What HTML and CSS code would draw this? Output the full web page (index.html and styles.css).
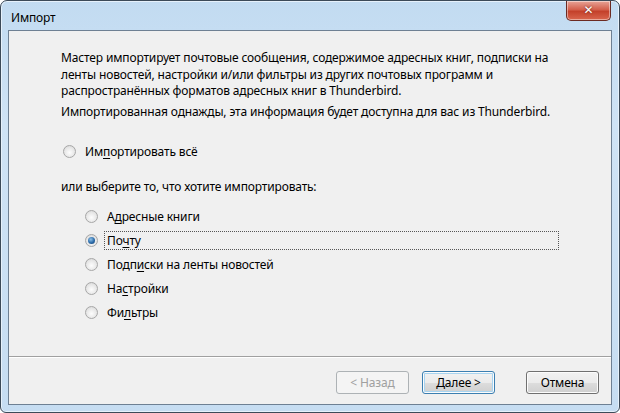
FILE: index.html
```html
<!DOCTYPE html>
<html lang="ru">
<head>
    <meta charset="UTF-8">
    <title>Импорт</title>
    <link rel="stylesheet" href="styles.css">
</head>
<body>
    <div class="window">
        <div class="titlebar">
            <span class="title">Импорт</span>
            <span class="close">&#x2715;</span>
        </div>
        <div class="client">
            <div class="content">
                <p class="intro">Мастер импортирует почтовые сообщения, содержимое адресных книг, подписки на ленты новостей, настройки и/или фильтры из других почтовых программ и распространённых форматов адресных книг в Thunderbird.</p>
                <p class="intro">Импортированная однажды, эта информация будет доступна для вас из Thunderbird.</p>

                <label class="opt opt_all"><span class="radio"></span>Им<u>п</u>ортировать всё</label>

                <p class="choose">или выберите то, что хотите импортировать:</p>

                <div class="list">
                    <label class="opt"><span class="radio"></span>А<u>д</u>ресные книги</label>
                    <label class="opt focused"><span class="radio checked"></span><span class="focus_text">По<u>ч</u>ту</span></label>
                    <label class="opt"><span class="radio"></span>Подп<u>и</u>ски на ленты новостей</label>
                    <label class="opt"><span class="radio"></span>На<u>с</u>тройки</label>
                    <label class="opt"><span class="radio"></span>Фи<u>л</u>ьтры</label>
                </div>
            </div>
            <div class="footer">
                <button class="btn" disabled>&lt; Назад</button>
                <button class="btn next">Далее &gt;</button>
                <button class="btn">Отмена</button>
            </div>
        </div>
    </div>
</body>
</html>
```

FILE: styles.css
```css
* {
    box-sizing: border-box;
}
html, body {
    margin: 0;
    background: #fff;
}
body {
    font-family: "Noto Sans", "Open Sans", sans-serif;
    font-size: 12px;
    letter-spacing: -0.15px;
    color: #000;
}
.window {
    width: 620px;
    height: 413px;
    display: flex;
    flex-direction: column;
    border: 1px solid #3c4a58;
    border-radius: 7px 7px 6px 6px;
    background: linear-gradient(to bottom, #c2dbf1 0%, #cfe3f5 30%, #c6ddf2 100%);
    box-shadow: inset 0 0 0 1px #e6f1fb;
}
.titlebar {
    height: 29px;
    flex-shrink: 0;
    display: flex;
    justify-content: space-between;
    align-items: flex-start;
}
.title {
    padding: 8px 0 0 10px;
    color: #000;
}
.close {
    width: 45px;
    height: 20px;
    margin-right: 8px;
    border: 1px solid #6b2a22;
    border-top: none;
    border-radius: 0 0 5px 5px;
    background: linear-gradient(to bottom, #e8a497 0%, #d4604c 45%, #c4412b 55%, #d9664e 100%);
    box-shadow: inset 0 0 0 1px rgba(255, 255, 255, 0.45);
    color: #fff;
    font-family: "DejaVu Sans", sans-serif;
    font-weight: bold;
    font-size: 12px;
    text-align: center;
    line-height: 19px;
    text-shadow: 0 0 2px #5a1a10;
}
.client {
    flex: 1;
    margin: 0 7px 7px 7px;
    border: 1px solid #6e8093;
    background: #f0f0f0;
    display: flex;
    flex-direction: column;
}
.content {
    flex: 1;
    padding: 19px 44px 0 52px;
}
.intro {
    margin: 0 0 4px 0;
    line-height: 16.5px;
}
.opt {
    display: flex;
    align-items: center;
    height: 24px;
}
.opt_all {
    margin: 19px 0 0 2px;
}
.choose {
    margin: 16px 0 0 0;
    line-height: 16px;
}
.list {
    margin: 9px 0 0 24px;
}
.radio {
    width: 13px;
    height: 13px;
    border-radius: 50%;
    border: 1px solid #a7a7a7;
    background: radial-gradient(circle at 50% 60%, #fdfdfd 0%, #e6e6e6 60%, #cfcfcf 100%);
    margin-right: 9px;
    flex-shrink: 0;
    position: relative;
}
.radio.checked::after {
    content: "";
    position: absolute;
    left: 2px;
    top: 2px;
    width: 7px;
    height: 7px;
    border-radius: 50%;
    background: radial-gradient(circle at 40% 35%, #8fc1e8 0%, #2a6aa8 55%, #1b3f6a 100%);
}
.focus_text {
    flex: 1;
    height: 19px;
    line-height: 17px;
    margin-left: -3px;
    padding-left: 2px;
    border: 1px dotted #555;
}
.focused {
    width: 474px;
}
u {
    text-decoration-thickness: 1px;
    text-underline-offset: 2px;
}
.footer {
    height: 48px;
    flex-shrink: 0;
    border-top: 1px solid #a0a0a0;
    box-shadow: inset 0 1px 0 #fff;
    display: flex;
    justify-content: flex-end;
    align-items: flex-start;
    padding: 14px 12px 0 0;
}
.btn {
    width: 73px;
    height: 23px;
    padding: 0;
    margin-left: 13px;
    font-family: inherit;
    font-size: 12px;
    letter-spacing: -0.15px;
    color: #000;
    border: 1px solid #707070;
    border-radius: 3px;
    background: linear-gradient(to bottom, #f2f2f2 0%, #ebebeb 50%, #dddddd 51%, #cfcfcf 100%);
    box-shadow: inset 0 0 0 1px #fcfcfc;
}
.btn.next {
    border-color: #3c7fb1;
    box-shadow: inset 0 0 0 1px #fcfcfc, inset 0 0 0 2px #a8d4f0;
}
.btn:last-child {
    margin-left: 31px;
}
.btn:disabled {
    color: #a0a0a0;
    border-color: #adb2b5;
    background: #f4f4f4;
    box-shadow: none;
}
```
